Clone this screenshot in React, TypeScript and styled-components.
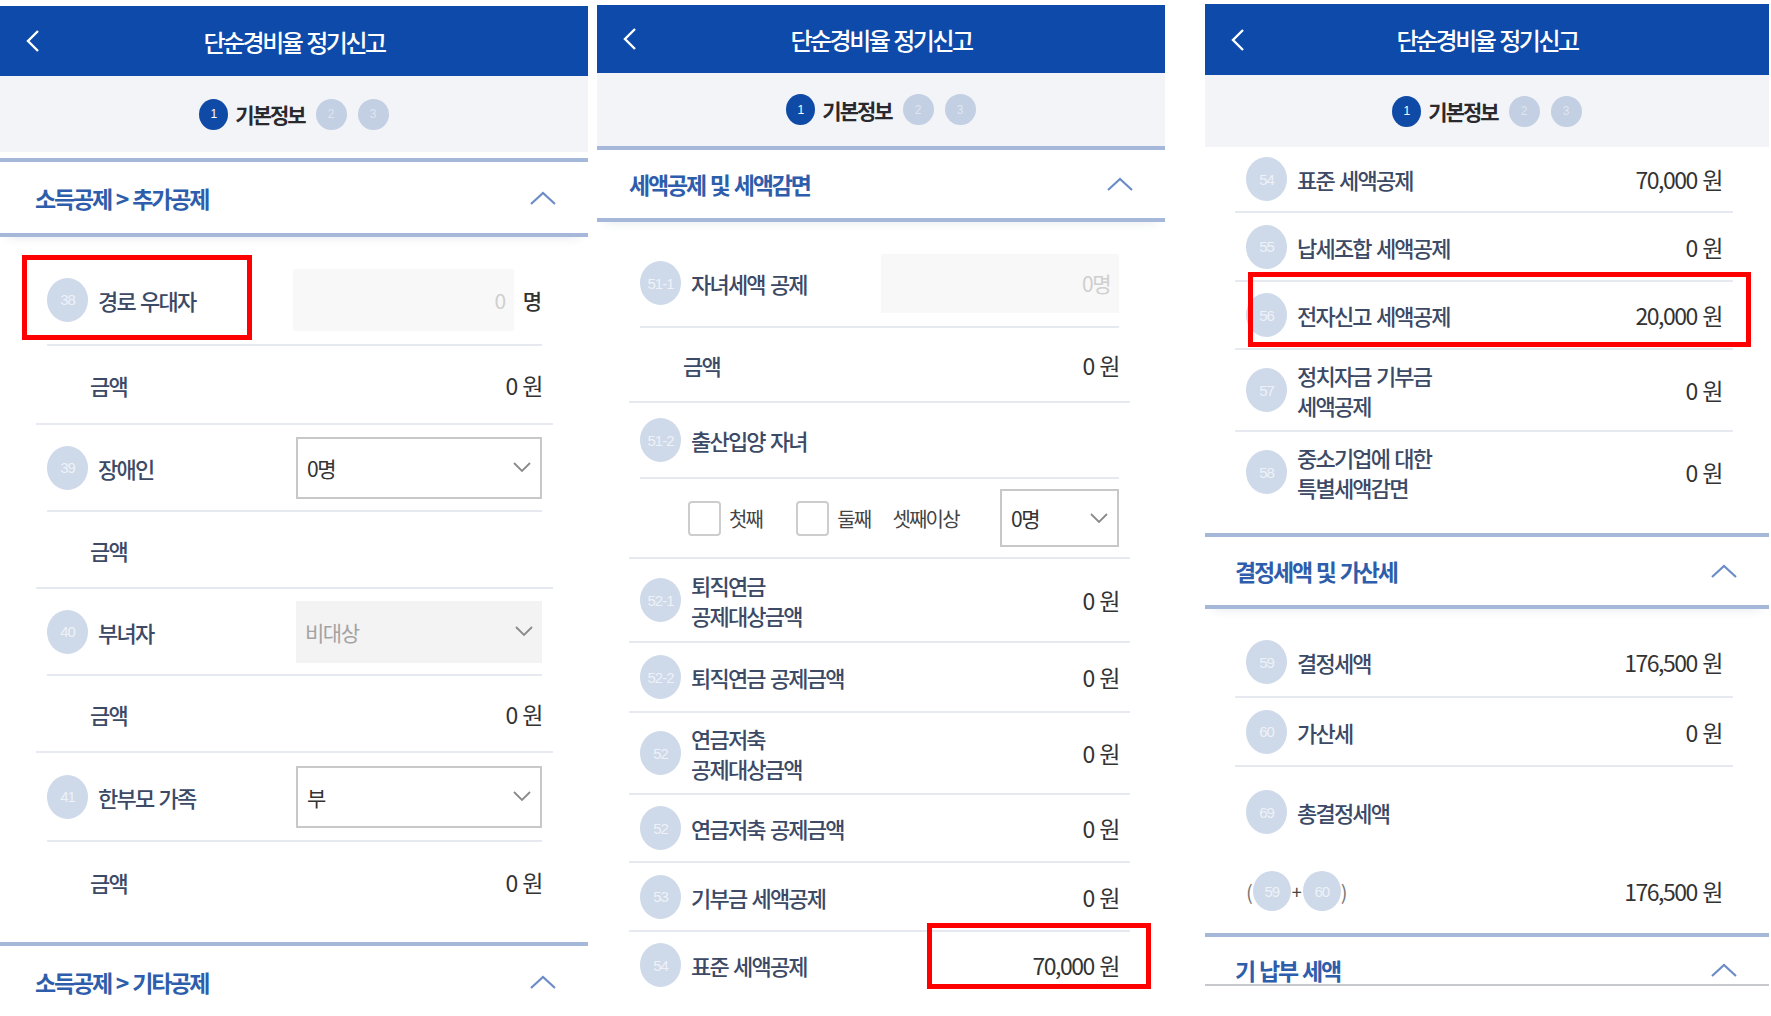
import React from 'react';
import styled, { createGlobalStyle } from 'styled-components';

const GlobalStyle = createGlobalStyle`
  html, body {
    margin: 0;
    padding: 0;
    background: #fff;
  }
  body {
    font-family: "Noto Sans CJK KR", "Noto Sans", sans-serif;
  }
  * {
    box-sizing: border-box;
  }
`;

const Page = styled.div`
  position: relative;
  display: flex;
  align-items: flex-start;
  width: 1771px;
  height: 1016px;
  overflow: hidden;
  word-spacing: 2px;
`;

const Phone = styled.section<{ $w: number; $ml: number; $mt: number; $h: number }>`
  display: flex;
  flex-direction: column;
  flex: none;
  width: ${(p) => p.$w}px;
  height: ${(p) => p.$h}px;
  margin-left: ${(p) => p.$ml}px;
  margin-top: ${(p) => p.$mt}px;
  overflow: hidden;
  background: #fff;
`;

const TopBar = styled.header<{ $h: number }>`
  display: grid;
  grid-template-columns: 70px 1fr 70px;
  align-items: center;
  flex: none;
  height: ${(p) => p.$h}px;
  background: #0d4aa9;
  color: #fff;
`;

const Back = styled.div`
  display: flex;
  align-items: center;
  padding-left: 26px;
`;

const Title = styled.h1`
  margin: 0;
  text-align: center;
  font-size: 24px;
  font-weight: 500;
  letter-spacing: -2.5px;
`;

const Steps = styled.div<{ $h: number }>`
  display: flex;
  align-items: center;
  justify-content: center;
  flex: none;
  height: ${(p) => p.$h}px;
  background: #f2f4f8;
`;

const StepDot = styled.span<{ $active?: boolean }>`
  display: inline-flex;
  align-items: center;
  justify-content: center;
  width: ${(p) => (p.$active ? 29 : 31)}px;
  height: 31px;
  margin-left: ${(p) => (p.$active ? 0 : 11)}px;
  border-radius: 50%;
  background: ${(p) => (p.$active ? '#0f4aa6' : '#c3cfe2')};
  color: ${(p) => (p.$active ? '#fff' : '#dfe6f0')};
  font-size: 12px;
  font-family: "Liberation Sans", sans-serif;
`;

const StepLabel = styled.span`
  margin-left: 7px;
  font-size: 21px;
  font-weight: 700;
  color: #2a2a2e;
  letter-spacing: -2px;
`;

const Section = styled.div<{ $h: number; $mt?: number; $pl: number; $pt?: number; $end?: boolean }>`
  display: flex;
  align-items: center;
  justify-content: space-between;
  flex: none;
  height: ${(p) => p.$h}px;
  margin-top: ${(p) => p.$mt ?? 0}px;
  padding: ${(p) => p.$pt ?? 0}px 31px 0 ${(p) => p.$pl}px;
  border-top: 4px solid #a6b8d9;
  border-bottom: ${(p) => (p.$end ? '2px solid #c6c8cc' : '4px solid #a6b8d9')};
  box-shadow: ${(p) => (p.$end ? 'none' : '0 8px 10px -8px rgba(40, 60, 90, 0.12)')};
`;

const SectionTitle = styled.h2`
  margin: 0;
  font-size: 23px;
  font-weight: 700;
  color: #2e5dab;
  letter-spacing: -2.2px;
`;

const List = styled.div<{ $pad: string }>`
  display: flex;
  flex-direction: column;
  flex: none;
  padding: ${(p) => p.$pad};
`;

type Line = 'inner' | 'outer' | 'none';

const Row = styled.div<{ $h: number; $line?: Line }>`
  display: flex;
  align-items: center;
  flex: none;
  height: ${(p) => p.$h}px;
  margin: 0 ${(p) => (p.$line === 'inner' ? 11 : 0)}px;
  padding: 0 ${(p) => (p.$line === 'inner' ? 0 : 11)}px;
  border-bottom: ${(p) => (p.$line === 'none' ? '0' : '2px solid #e6e9ef')};
`;

const Badge = styled.span<{ $small?: boolean }>`
  display: inline-flex;
  align-items: center;
  justify-content: center;
  flex: none;
  width: ${(p) => (p.$small ? 38 : 41)}px;
  height: ${(p) => (p.$small ? 40 : 44)}px;
  border-radius: 50%;
  background: #ced9e9;
  color: #eef2f8;
  font-size: 15px;
  font-family: "Liberation Sans", sans-serif;
  letter-spacing: -1px;
  word-spacing: 0;
`;

const Label = styled.span`
  flex: 1;
  margin-left: 10px;
  font-size: 22px;
  line-height: 30px;
  font-weight: 500;
  color: #3c4a66;
  letter-spacing: -1.8px;
`;

const SubLabel = styled.span`
  flex: 1;
  padding-left: 43px;
  font-size: 22px;
  font-weight: 500;
  color: #3c4a66;
  letter-spacing: -1.8px;
`;

const Value = styled.span`
  margin-left: auto;
  font-size: 23px;
  color: #333;
  letter-spacing: -1.5px;
  white-space: nowrap;
`;

type FieldKind = 'input' | 'select' | 'disabled';

const Field = styled.div<{ $w: number; $h: number; $kind: FieldKind }>`
  display: flex;
  align-items: center;
  justify-content: ${(p) => (p.$kind === 'input' ? 'flex-end' : 'space-between')};
  flex: none;
  width: ${(p) => p.$w}px;
  height: ${(p) => p.$h}px;
  padding: 0 9px 0 9px;
  background: ${(p) => (p.$kind === 'select' ? '#fff' : p.$kind === 'input' ? '#f8f8f8' : '#f3f3f3')};
  border: ${(p) => (p.$kind === 'select' ? '2px solid #c8c8c8' : '0')};
  color: ${(p) => (p.$kind === 'select' ? '#333' : p.$kind === 'input' ? '#cfcfcf' : '#a3a3a3')};
  font-size: 21px;
  letter-spacing: -1.5px;
`;

const Unit = styled.span`
  margin-left: 9px;
  font-size: 21px;
  font-weight: 500;
  color: #333;
`;

const CheckGroup = styled.div`
  display: flex;
  align-items: center;
  width: 100%;
  padding-left: 48px;
`;

const Check = styled.span<{ $ml?: number }>`
  flex: none;
  width: 33px;
  height: 35px;
  margin-left: ${(p) => p.$ml ?? 0}px;
  border: 2px solid #cdcdcd;
  border-radius: 4px;
  background: #fff;
`;

const CheckText = styled.span<{ $ml?: number }>`
  margin-left: ${(p) => p.$ml ?? 8}px;
  font-size: 20px;
  color: #444;
  letter-spacing: -1.8px;
`;

const PushRight = styled.div`
  margin-left: auto;
`;

const Formula = styled.div`
  display: flex;
  align-items: center;
  flex: 1;
  color: #777;
  font-size: 20px;
`;

const Plus = styled.span`
  margin: 0 1px;
  color: #444;
  font-size: 18px;
`;

const Highlight = styled.div`
  position: absolute;
  border: 5px solid #ff0000;
  pointer-events: none;
`;

const BackIcon = () => (
  <svg width="14" height="24" viewBox="0 0 14 24">
    <polyline points="12,2 2,12 12,22" fill="none" stroke="#fff" strokeWidth="2.4" />
  </svg>
);

const UpIcon = () => (
  <svg width="28" height="16" viewBox="0 0 28 16">
    <polyline points="2,14 14,3 26,14" fill="none" stroke="#6b8cc6" strokeWidth="2.2" />
  </svg>
);

const DownIcon = () => (
  <svg width="18" height="11" viewBox="0 0 18 11">
    <polyline points="1,1 9,9 17,1" fill="none" stroke="#8a8a8a" strokeWidth="1.8" />
  </svg>
);

const Header = ({ h }: { h: number }) => (
  <TopBar $h={h}>
    <Back><BackIcon /></Back>
    <Title>단순경비율 정기신고</Title>
    <span />
  </TopBar>
);

const StepBar = ({ h }: { h: number }) => (
  <Steps $h={h}>
    <StepDot $active>1</StepDot>
    <StepLabel>기본정보</StepLabel>
    <StepDot>2</StepDot>
    <StepDot>3</StepDot>
  </Steps>
);

const Head = (props: { title: string; h: number; pl: number; mt?: number; pt?: number; end?: boolean }) => (
  <Section $h={props.h} $pl={props.pl} $mt={props.mt} $pt={props.pt} $end={props.end}>
    <SectionTitle>{props.title}</SectionTitle>
    <UpIcon />
  </Section>
);

const Item = (props: { no: string; label: React.ReactNode; value?: string; h: number; line?: Line }) => (
  <Row $h={props.h} $line={props.line ?? 'outer'}>
    <Badge>{props.no}</Badge>
    <Label>{props.label}</Label>
    {props.value && <Value>{props.value}</Value>}
  </Row>
);

const Amount = ({ value, h, line }: { value?: string; h: number; line?: Line }) => (
  <Row $h={h} $line={line ?? 'outer'}>
    <SubLabel>금액</SubLabel>
    {value && <Value>{value}</Value>}
  </Row>
);

const Select = ({ text, w, h = 62, kind }: { text: string; w: number; h?: number; kind: FieldKind }) => (
  <Field $w={w} $h={h} $kind={kind}>
    <span>{text}</span>
    <DownIcon />
  </Field>
);

const App = () => {
  return (
    <>
      <GlobalStyle />
      <Page>
        <Phone $w={588} $ml={0} $mt={6} $h={1010}>
          <Header h={70} />
          <StepBar h={76} />
          <Head title="소득공제 > 추가공제" h={79} pl={35} mt={6} />
          <List $pad="18px 35px 0 36px">
            <Row $h={91} $line="inner">
              <Badge>38</Badge>
              <Label>경로 우대자</Label>
              <Field $w={221} $h={62} $kind="input">0</Field>
              <Unit>명</Unit>
            </Row>
            <Amount value="0 원" h={79} />
            <Row $h={87} $line="inner">
              <Badge>39</Badge>
              <Label>장애인</Label>
              <Select text="0명" w={246} kind="select" />
            </Row>
            <Amount h={77} />
            <Row $h={87} $line="inner">
              <Badge>40</Badge>
              <Label>부녀자</Label>
              <Select text="비대상" w={246} kind="disabled" />
            </Row>
            <Amount value="0 원" h={77} />
            <Row $h={89} $line="inner">
              <Badge>41</Badge>
              <Label>한부모 가족</Label>
              <Select text="부" w={246} kind="select" />
            </Row>
            <Amount value="0 원" h={80} line="none" />
          </List>
          <Head title="소득공제 > 기타공제" h={79} pl={35} mt={20} />
        </Phone>

        <Phone $w={568} $ml={9} $mt={5} $h={983}>
          <Header h={68} />
          <StepBar h={73} />
          <Head title="세액공제 및 세액감면" h={76} pl={32} />
          <List $pad="18px 35px 0 32px">
            <Row $h={88} $line="inner">
              <Badge>51-1</Badge>
              <Label>자녀세액 공제</Label>
              <Field $w={238} $h={59} $kind="input">0명</Field>
            </Row>
            <Amount value="0 원" h={75} />
            <Item no="51-2" label="출산입양 자녀" h={76} line="inner" />
            <Row $h={80}>
              <CheckGroup>
                <Check />
                <CheckText>첫째</CheckText>
                <Check $ml={34} />
                <CheckText>둘째</CheckText>
                <CheckText $ml={22}>셋째이상</CheckText>
                <PushRight>
                  <Select text="0명" w={119} h={58} kind="select" />
                </PushRight>
              </CheckGroup>
            </Row>
            <Item no="52-1" label={<>퇴직연금<br />공제대상금액</>} value="0 원" h={84} />
            <Item no="52-2" label="퇴직연금 공제금액" value="0 원" h={70} />
            <Item no="52" label={<>연금저축<br />공제대상금액</>} value="0 원" h={82} />
            <Item no="52" label="연금저축 공제금액" value="0 원" h={68} />
            <Item no="53" label="기부금 세액공제" value="0 원" h={69} />
            <Item no="54" label="표준 세액공제" value="70,000 원" h={68} />
          </List>
        </Phone>

        <Phone $w={564} $ml={40} $mt={4} $h={984}>
          <Header h={71} />
          <StepBar h={72} />
          <List $pad="0 36px 0 30px">
            <Item no="54" label="표준 세액공제" value="70,000 원" h={66} />
            <Item no="55" label="납세조합 세액공제" value="0 원" h={69} />
            <Item no="56" label="전자신고 세액공제" value="20,000 원" h={68} />
            <Item no="57" label={<>정치자금 기부금<br />세액공제</>} value="0 원" h={82} />
            <Item no="58" label={<>중소기업에 대한<br />특별세액감면</>} value="0 원" h={80} line="none" />
          </List>
          <Head title="결정세액 및 가산세" h={76} pl={30} mt={21} />
          <List $pad="19px 36px 0 30px">
            <Item no="59" label="결정세액" value="176,500 원" h={70} />
            <Item no="60" label="가산세" value="0 원" h={69} />
            <Item no="69" label="총결정세액" h={90} line="none" />
            <Row $h={68} $line="none">
              <Formula>
                (
                <Badge $small>59</Badge>
                <Plus>+</Plus>
                <Badge $small>60</Badge>
                )
              </Formula>
              <Value>176,500 원</Value>
            </Row>
          </List>
          <Head title="기 납부 세액" h={53} pl={30} mt={8} pt={18} end />
        </Phone>

        <Highlight style={{ left: 22, top: 255, width: 230, height: 85 }} />
        <Highlight style={{ left: 927, top: 923, width: 224, height: 66 }} />
        <Highlight style={{ left: 1248, top: 272, width: 503, height: 75 }} />
      </Page>
    </>
  );
};

export default App;
